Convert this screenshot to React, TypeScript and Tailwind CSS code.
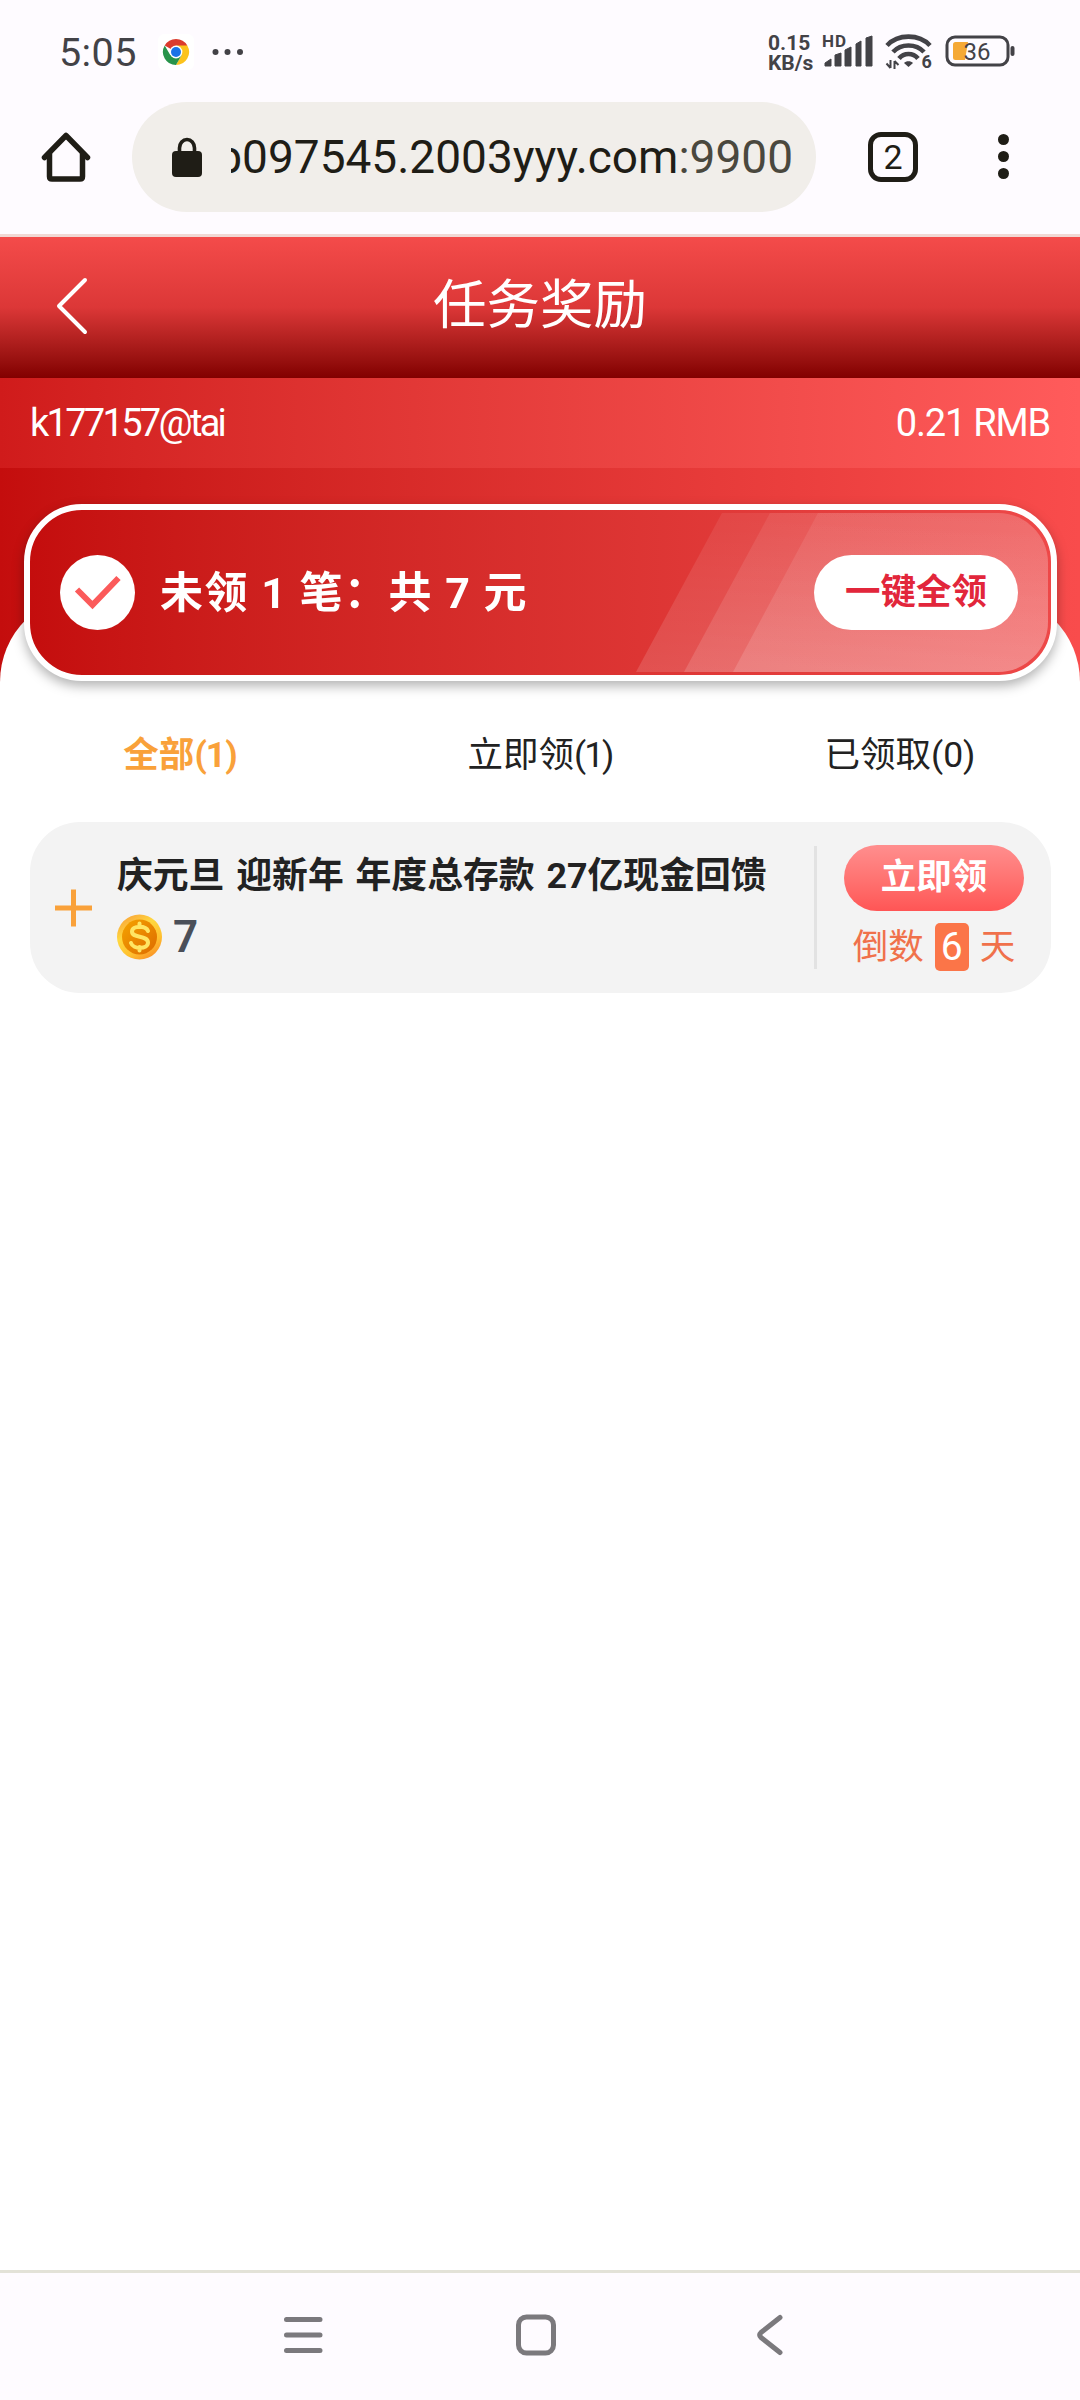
import type { ReactNode } from "react";

function StatusBar() {
  return (
    <div className="flex h-[102px] items-center pl-[59px] text-[#434247]">
      <p className="mt-[3px] w-[81px] text-[39.500px] leading-none tracking-[0.4px]">5:05</p>
      <svg className="ml-[18px] mt-[1px]" width="36" height="36" viewBox="0 0 36 36">
        <rect width="36" height="36" rx="6" fill="#fff" />
        <path d="M18 18 L6.7 11.5 A13 13 0 0 1 29.3 11.5 Z" fill="#db3b2e" />
        <path d="M18 11.5 H29.3 A13 13 0 0 1 18 31 L23.6 21.2 Z" fill="#fcc31d" />
        <path d="M18 18 L18 31 A13 13 0 0 1 6.7 11.5 L12.4 21.2 Z" fill="#27944a" />
        <path d="M12.4 21.2 L23.6 21.2 L18 31 Z" fill="#27944a" />
        <circle cx="18" cy="18" r="6.4" fill="#fff" />
        <circle cx="18" cy="18" r="5" fill="#1a73e8" />
      </svg>
      <svg className="ml-[18px] mt-[2px]" width="32" height="8" viewBox="0 0 32 8" fill="#434247">
        <circle cx="3.5" cy="4" r="3" />
        <circle cx="15.5" cy="4" r="3" />
        <circle cx="28" cy="4" r="3" />
      </svg>

      <div className="ml-auto mr-[63px] flex items-center">
        <div className="mt-[3px] w-[54px] text-[21px] leading-[20px] font-bold">
          <p>0.15</p>
          <p>KB/s</p>
        </div>
        <svg className="overflow-visible" width="52" height="36" viewBox="0 0 52 36" fill="#434247">
          <text x="0" y="14" fontSize="17" fontWeight="700" textLength="24">HD</text>
          <path d="M3 33 V30 L9 26 V33 Z M13 33 V22 L19 20 V33 Z M23 33 V17 L29 14 V33 Z M34 33 V11 L39 8 V33 Z M44 33 V5 L50 3 V33 Z" stroke="#434247" strokeWidth="1" strokeLinejoin="round" />
        </svg>
        <svg className="ml-[10px] overflow-visible" width="50" height="38" viewBox="0 0 50 38" fill="none" stroke="#434247" strokeWidth="4.6">
          <path d="M3 13.5 C14 1.7 35 1.7 46 13.5" />
          <path d="M9 20 C17 11.3 32 11.3 40 20" />
          <path d="M15 26.5 C20 20.5 29 20.5 34 26.5" />
          <path d="M24.5 35 L20 31 C22 28.5 27 28.5 29 31 Z" fill="#434247" stroke="none" />
          <path d="M6.500 28 V36 M2.500 31.500 L6.500 36 M10.500 37 V29 M14.500 33 L10.500 29" strokeWidth="2" />
          <text x="37.500" y="36" fontSize="18" fontWeight="700" fill="#434247" stroke="none">6</text>
        </svg>
        <svg className="ml-[11px]" width="72" height="32" viewBox="0 0 72 32">
          <rect x="2" y="2" width="61" height="28" rx="8" fill="none" stroke="#434247" strokeWidth="3" />
          <path d="M8 9.500 Q8 7 10.500 7 H23 L20 25 H10.500 Q8 25 8 22.500 Z" fill="#f5a935" />
          <rect x="65.500" y="11" width="4" height="10" rx="2" fill="#434247" />
          <text x="18.500" y="24.500" fontSize="24" fill="#434247">36</text>
        </svg>
      </div>
    </div>
  );
}

function BrowserBar() {
  return (
    <div className="flex h-[132px] items-start text-[#1f1d16]">
      <svg className="ml-[40px] mt-[28px]" width="52" height="56" viewBox="0 0 52 56" fill="none" stroke="#1f1d16" strokeWidth="5.500" strokeLinecap="round" strokeLinejoin="round">
        <path d="M4.500 27.500 L26 5.500 L47.500 27.500" />
        <path d="M9.500 24 V46.500 Q9.500 49 12 49 H40 Q42.500 49 42.500 46.500 V24" />
      </svg>
      <div className="ml-[40px] flex h-[110px] w-[684px] items-center rounded-full bg-[#f1eeea]">
        <svg className="ml-[39px]" width="32" height="42" viewBox="0 0 32 42">
          <path d="M8.500 16 V12 A7.500 8.500 0 0 1 23.500 12 V16" fill="none" stroke="#1f1d16" strokeWidth="3.600" />
          <rect x="1" y="15" width="30" height="26" rx="4" fill="#1f1d16" />
        </svg>
        <div className="ml-[28px] flex w-[562px] justify-end overflow-hidden text-[46px] leading-[64px] whitespace-nowrap">
          <span>b097545.2003yyy.com</span>
          <span className="text-[#4a483e]">:9900</span>
        </div>
      </div>
      <div className="mt-[30px] ml-[52px] flex size-[50px] items-center justify-center rounded-[13px] border-[5.500px] border-[#1f1d16]">
        <span className="text-[34px] leading-none">2</span>
      </div>
      <div className="mt-[32px] ml-[80px] flex flex-col gap-[6px]">
        <i className="size-[11px] rounded-full bg-[#1f1d16]" />
        <i className="size-[11px] rounded-full bg-[#1f1d16]" />
        <i className="size-[11px] rounded-full bg-[#1f1d16]" />
      </div>
    </div>
  );
}

function PageHeader() {
  return (
    <>
      <div className="grid h-[144px] grid-cols-[1fr_auto_1fr] items-center border-t-[3px] border-[#f1d8d4] bg-linear-to-b from-[#f44b4a] via-[#dc3737] to-[#820000] text-white">
        <svg className="mt-[-4px] ml-[55px]" width="34" height="58" viewBox="0 0 34 58" fill="none" stroke="#fff" strokeWidth="4" strokeLinecap="round" strokeLinejoin="round">
          <path d="M30 3 L4 29 L30 55" />
        </svg>
        <h1 className="mt-[-3px] text-[53.500px] leading-none">任务奖励</h1>
      </div>
      <div className="flex h-[90px] items-center justify-between bg-linear-to-r from-[#d01b1b] to-[#ff5b5b] px-[30px] text-[38px] leading-none text-white">
        <span className="tracking-[-2.700px]">k177157@tai</span>
        <span className="tracking-[-1.200px]">0.21 RMB</span>
      </div>
    </>
  );
}

function SummaryCard() {
  return (
    <div className="relative mr-[23px] ml-[24px] flex h-[177px] items-center overflow-hidden rounded-[58px] border-6 border-white bg-linear-to-r from-[#c40d0d] to-[#ee4848] pr-[33px] pl-[30px]">
      {/* slanted highlight */}
      <svg className="absolute top-[3px] left-[600px]" width="418" height="159" viewBox="0 0 418 159">
        <defs>
          <linearGradient id="shine" x1="0" y1="0" x2="0" y2="1">
            <stop offset="0" stopColor="#fff" stopOpacity="0.07" />
            <stop offset="1" stopColor="#fff" stopOpacity="0.14" />
          </linearGradient>
          <clipPath id="inner">
            <rect x="-200" width="618" height="159" rx="50" />
          </clipPath>
        </defs>
        <g fill="url(#shine)" clipPath="url(#inner)">
          <path d="M92 0 H418 V159 H6 Z" />
          <path d="M140 0 H418 V159 H54 Z" />
          <path d="M188 0 H418 V159 H103 Z" />
        </g>
      </svg>
      <svg className="shrink-0" width="75" height="75" viewBox="0 0 75 75">
        <circle cx="37.500" cy="37.500" r="37.500" fill="#fff" />
        <path d="M17 34.500 L32.500 50 L58.500 23" fill="none" stroke="#fb5a5a" strokeWidth="6" />
      </svg>
      <p className="mt-[2px] ml-[25px] text-[43px] leading-none font-bold tracking-[1.500px] whitespace-pre text-white">未领 1 笔：共 7 元</p>
      <button className="relative ml-auto h-[75px] w-[204px] rounded-full bg-white text-[35.500px] leading-none font-bold text-[#e2263b]">一键全领</button>
    </div>
  );
}

function Tab({ active, children }: { active?: boolean; children: ReactNode }) {
  return (
    <div className={active ? "text-center font-bold text-[#f9a13a]" : "text-center text-[#222]"}>{children}</div>
  );
}

function Coin() {
  return (
    <svg width="45" height="46" viewBox="0 0 45 46">
      <defs>
        <linearGradient id="rim" x1="0.2" y1="0" x2="0.8" y2="1">
          <stop offset="0" stopColor="#f9a33a" />
          <stop offset="0.35" stopColor="#ffd83f" />
          <stop offset="0.7" stopColor="#ffc02f" />
          <stop offset="1" stopColor="#f98b25" />
        </linearGradient>
        <linearGradient id="face" x1="0" y1="0" x2="1" y2="1">
          <stop offset="0" stopColor="#f5a400" />
          <stop offset="1" stopColor="#dd6a00" />
        </linearGradient>
      </defs>
      <circle cx="22.500" cy="23" r="22.500" fill="url(#rim)" />
      <circle cx="22.500" cy="23" r="17.500" fill="url(#face)" />
      <path d="M31 17 C29 11.500 15 11 15 17.800 C15 24.500 31 21 31 28.500 C31 35.500 16 35.500 14 29 M22.500 9.500 V13 M22.500 33 V36.500" fill="none" stroke="#ffe564" strokeWidth="4" strokeLinecap="round" />
    </svg>
  );
}

function RewardItem() {
  return (
    <div className="mr-[29px] ml-[30px] flex h-[171px] rounded-[50px] bg-[#f3f3f3]">
      <svg className="mt-[67px] ml-[25px]" width="38" height="38" viewBox="0 0 38 38" stroke="#f9a13a" strokeWidth="5">
        <path d="M0 19 H37 M18.500 0.500 V37.500" />
      </svg>
      <div className="mt-[32px] ml-[24px] flex w-[697px] flex-col">
        <p className="text-[35.800px] leading-[44px] font-bold [word-spacing:3px] whitespace-nowrap text-[#222]">庆元旦 迎新年 年度总存款 27亿现金回馈</p>
        <div className="mt-[16px] flex items-center">
          <Coin />
          <span className="ml-[11px] text-[44px] leading-[46px] font-semibold text-[#4a4f58]">7</span>
        </div>
      </div>
      <div className="mt-[24px] h-[123px] w-[3px] bg-[#e2e2e2]" />
      <div className="mt-[23px] ml-[27px] flex w-[180px] flex-col items-center">
        <button className="h-[66px] w-full rounded-full bg-linear-to-b from-[#ff8e8e] to-[#ff5555] text-[35.500px] leading-none font-bold text-white">立即领</button>
        <div className="mt-[12px] flex items-center text-[35.500px] leading-[46px] text-[#f0714b]">
          <span>倒数</span>
          <span className="mx-[11px] h-[48px] w-[34px] rounded-[5px] bg-[#fb7548] text-center text-[39px] leading-[48px] text-white">6</span>
          <span>天</span>
        </div>
      </div>
    </div>
  );
}

function NavBar() {
  return (
    <div className="mt-auto flex h-[130px] items-start border-t-[3px] border-[#e3e2d8] bg-[#fefbff] pt-[40px]">
      <svg className="ml-[282px]" width="42" height="44" viewBox="0 0 42 44" stroke="#7b797d" strokeWidth="5" strokeLinecap="round">
        <path d="M4.500 6.500 H38 M4.500 22 H38 M4.500 37.500 H38" />
      </svg>
      <svg className="ml-[190px]" width="44" height="44" viewBox="0 0 44 44">
        <rect x="4.500" y="4" width="35" height="36" rx="8" fill="none" stroke="#7b797d" strokeWidth="5" />
      </svg>
      <svg className="ml-[196px]" width="32" height="44" viewBox="0 0 32 44" fill="none" stroke="#7b797d" strokeWidth="5" strokeLinecap="round" strokeLinejoin="round">
        <path d="M26 4.500 L7 19.500 Q4.500 22 7 24.500 L26 39.500" />
      </svg>
    </div>
  );
}

export default function App() {
  return (
    <div className="flex h-[2400px] w-[1080px] flex-col overflow-hidden bg-white font-['Roboto','Noto_Sans_CJK_SC',sans-serif]">
      <div className="bg-[#fefbff]">
        <StatusBar />
        <BrowserBar />
      </div>
      <PageHeader />
      <div className="bg-linear-to-r from-[#c40d0d] to-[#f94c4c] pt-[126px]">
        <div className="h-[88px] rounded-t-[88px] bg-white" />
      </div>
      <div className="relative z-10 mt-[-178px] rounded-[58px] drop-shadow-[0_5px_6px_rgba(0,0,0,0.3)]">
        <SummaryCard />
      </div>
      <div className="grid h-[141px] grid-cols-3 items-center pt-[8px] text-[35.500px] leading-none">
        <Tab active>全部<span className="tracking-[-1px]">(1)</span></Tab>
        <Tab>立即领<span className="tracking-[-2px]">(1)</span></Tab>
        <Tab>已领取(0)</Tab>
      </div>
      <RewardItem />
      <NavBar />
    </div>
  );
}
